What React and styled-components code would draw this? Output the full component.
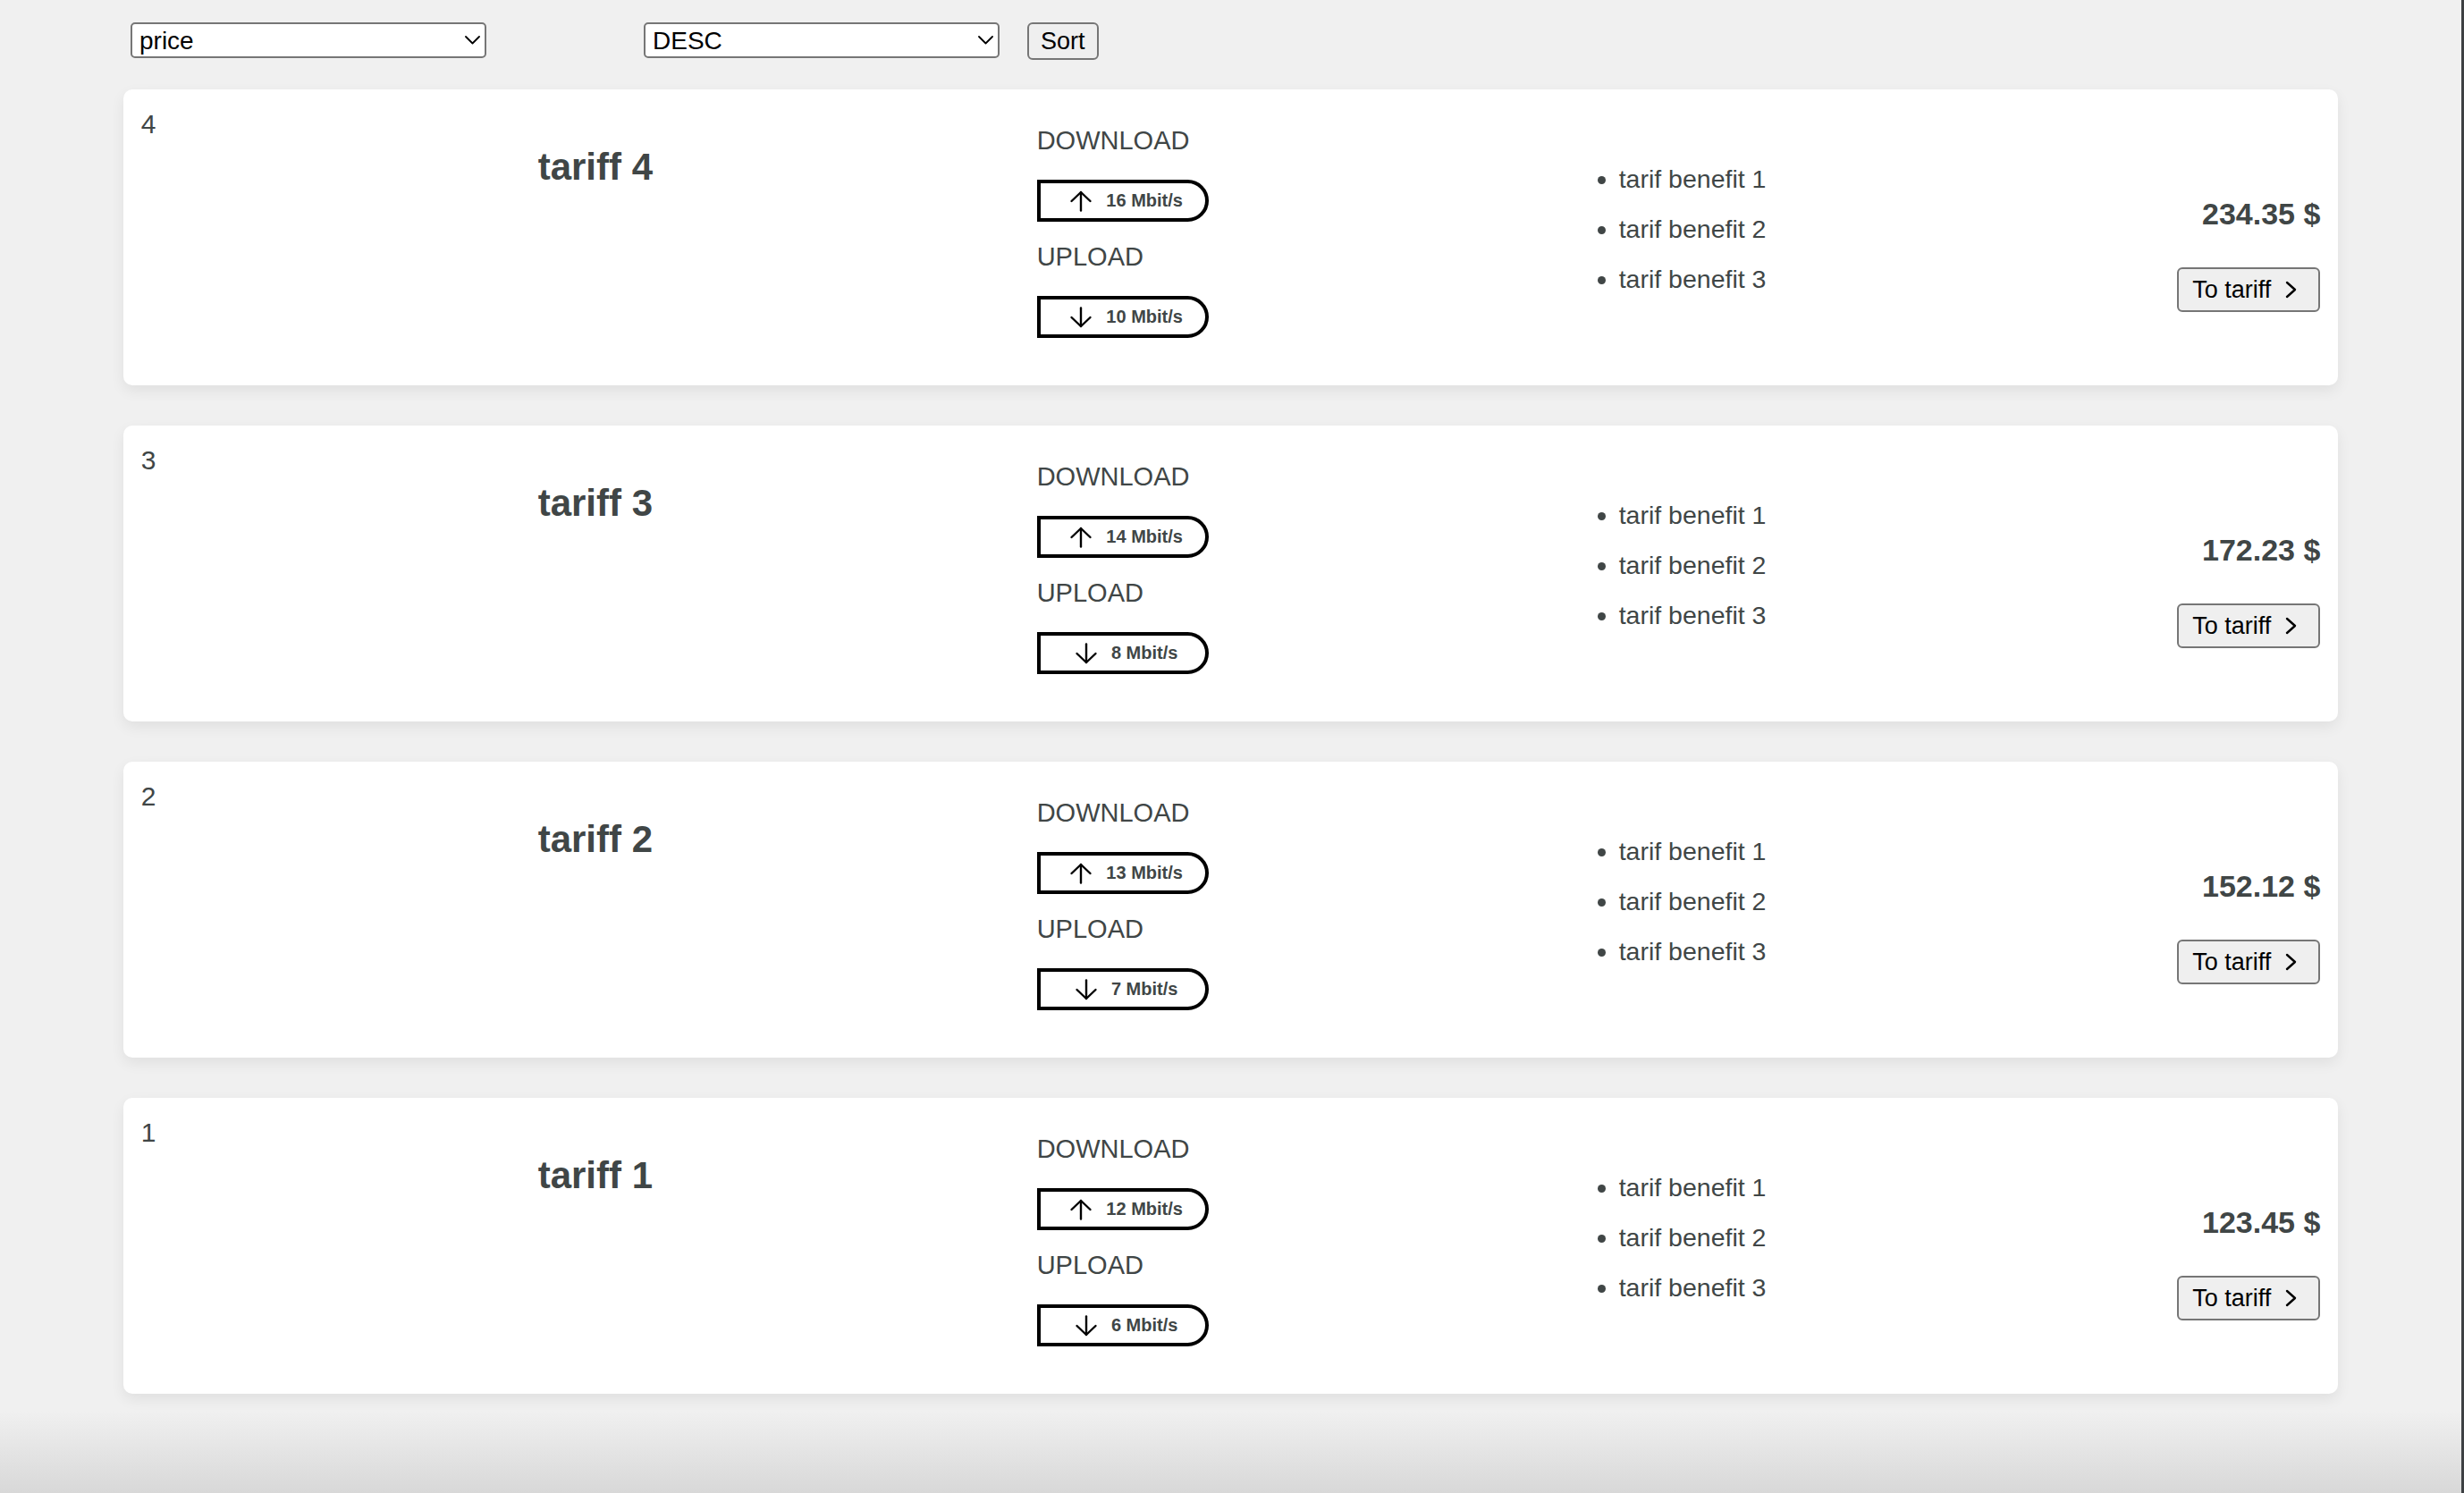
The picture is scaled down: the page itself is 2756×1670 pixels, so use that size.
import React, { useState } from 'react';
import styled, { createGlobalStyle } from 'styled-components';

const GlobalStyle = createGlobalStyle`
  html, body {
    margin: 0;
    padding: 0;
  }
  body {
    font-family: "Liberation Sans", Arial, Helvetica, sans-serif;
    background: #f0f0f0;
  }
  * {
    box-sizing: border-box;
  }
`;

const Page = styled.div`
  min-height: 100vh;
  border-right: 3px solid #3d4043;
  background: linear-gradient(180deg, #f0f0f0 0%, #f0f0f0 94.5%, #d8d8d8 100%);
  padding-bottom: 40px;
`;

const Toolbar = styled.div`
  display: flex;
  align-items: flex-start;
  padding: 25px 0 0 146px;
`;

const SelectWrap = styled.div`
  position: relative;
  width: 398px;
  height: 40px;
  margin-right: ${(p) => p.$gapAfter}px;
`;

const Select = styled.select`
  appearance: none;
  -webkit-appearance: none;
  width: 100%;
  height: 100%;
  padding: 0 36px 0 8px;
  border: 2px solid #767676;
  border-radius: 5px;
  background: #fff;
  color: #000;
  font-family: "Liberation Sans", Arial, sans-serif;
  font-size: 28px;
  outline: none;
`;

const SelectArrow = styled.svg`
  position: absolute;
  right: 7px;
  top: 15px;
  width: 17px;
  height: 10px;
  pointer-events: none;
`;

const PlainButton = styled.button`
  display: inline-flex;
  align-items: center;
  height: ${(p) => p.$height}px;
  padding: 0 ${(p) => p.$padX}px;
  background: #efefef;
  border: 2px solid #767676;
  border-radius: 6px;
  color: #000;
  font-family: "Liberation Sans", Arial, sans-serif;
  font-size: 27px;
  cursor: pointer;
`;

const ButtonIcon = styled.span`
  display: inline-flex;
  margin-left: 8px;
`;

const CardList = styled.div`
  display: flex;
  flex-direction: column;
  gap: 45px;
  width: 90%;
  margin: 33px auto 0;
`;

const Card = styled.div`
  display: grid;
  grid-template-columns: 444px 558px 619px 1fr auto;
  align-items: start;
  padding: 22px 20px;
  background: #fff;
  border-radius: 10px;
  box-shadow: 0 6px 16px rgba(0, 0, 0, 0.07);
  color: #404646;
`;

const Num = styled.div`
  font-size: 30px;
  line-height: 1.15;
`;

const Title = styled.h2`
  margin: 41px 0 0;
  font-size: 42px;
  font-weight: 700;
  line-height: 1.15;
`;

const Speeds = styled.div`
  display: flex;
  flex-direction: column;
  align-items: flex-start;
  margin: 19px 0 31px;
`;

const SpeedLabel = styled.div`
  font-size: 29px;
  line-height: 32px;
  margin-bottom: 28px;
`;

const SpeedBadge = styled.div`
  display: flex;
  align-items: center;
  justify-content: center;
  gap: 15px;
  width: 192px;
  height: 47px;
  margin-bottom: ${(p) => (p.$last ? 0 : 23)}px;
  padding-left: 8px;
  border: 4px solid #000;
  border-radius: 0 24px 24px 0;
  font-size: 20px;
  font-weight: 700;
`;

const Benefits = styled.ul`
  margin: 62px 0 0;
  padding-left: 32px;
  font-size: 28.5px;
  line-height: 32px;
  list-style: disc;
`;

const Benefit = styled.li`
  margin-bottom: 24px;

  &:last-child {
    margin-bottom: 0;
  }
`;

const PriceCol = styled.div`
  display: flex;
  flex-direction: column;
  align-items: flex-end;
  margin-top: 98px;
`;

const Price = styled.div`
  font-size: 34px;
  font-weight: 700;
  line-height: 39px;
  margin-bottom: 40px;
`;

const ArrowIcon = ({ down }) => (
  <svg width="26" height="24" viewBox="0 0 26 24" fill="none" stroke="#000" strokeWidth="2.4" strokeLinecap="round" strokeLinejoin="round">
    {down ? (
      <>
        <line x1="13" y1="1.5" x2="13" y2="22" />
        <polyline points="2.5,12 13,22 23.5,12" />
      </>
    ) : (
      <>
        <line x1="13" y1="2" x2="13" y2="22.5" />
        <polyline points="2.5,12 13,2 23.5,12" />
      </>
    )}
  </svg>
);

const ChevronRight = () => (
  <svg width="30" height="30" viewBox="0 0 30 30" fill="none" stroke="#000" strokeWidth="2.4" strokeLinecap="round" strokeLinejoin="round">
    <polyline points="10,7 19,15 10,23" />
  </svg>
);

const ChevronDown = () => (
  <SelectArrow viewBox="0 0 17 10" fill="none" stroke="#000" strokeWidth="1.8" strokeLinecap="round" strokeLinejoin="round">
    <polyline points="1,1 8.5,8.5 16,1" />
  </SelectArrow>
);

const tariffs = [
  { id: 4, name: 'tariff 4', down: 16, up: 10, price: '234.35' },
  { id: 3, name: 'tariff 3', down: 14, up: 8, price: '172.23' },
  { id: 2, name: 'tariff 2', down: 13, up: 7, price: '152.12' },
  { id: 1, name: 'tariff 1', down: 12, up: 6, price: '123.45' },
];

const TariffCard = ({ tariff }) => (
  <Card>
    <Num>{tariff.id}</Num>
    <Title>{tariff.name}</Title>
    <Speeds>
      <SpeedLabel>DOWNLOAD</SpeedLabel>
      <SpeedBadge>
        <ArrowIcon />
        <span>{tariff.down} Mbit/s</span>
      </SpeedBadge>
      <SpeedLabel>UPLOAD</SpeedLabel>
      <SpeedBadge $last>
        <ArrowIcon down />
        <span>{tariff.up} Mbit/s</span>
      </SpeedBadge>
    </Speeds>
    <div>
      <Benefits>
        <Benefit>tarif benefit 1</Benefit>
        <Benefit>tarif benefit 2</Benefit>
        <Benefit>tarif benefit 3</Benefit>
      </Benefits>
    </div>
    <PriceCol>
      <Price>{tariff.price} $</Price>
      <PlainButton $height={50} $padX={15}>
        To tariff
        <ButtonIcon>
          <ChevronRight />
        </ButtonIcon>
      </PlainButton>
    </PriceCol>
  </Card>
);

const App = () => {
  const [field, setField] = useState('price');
  const [order, setOrder] = useState('DESC');

  return (
    <Page>
      <GlobalStyle />
      <Toolbar>
        <SelectWrap $gapAfter={176}>
          <Select value={field} onChange={(e) => setField(e.target.value)}>
            <option value="price">price</option>
            <option value="name">name</option>
          </Select>
          <ChevronDown />
        </SelectWrap>
        <SelectWrap $gapAfter={31}>
          <Select value={order} onChange={(e) => setOrder(e.target.value)}>
            <option value="DESC">DESC</option>
            <option value="ASC">ASC</option>
          </Select>
          <ChevronDown />
        </SelectWrap>
        <PlainButton $height={42} $padX={13}>Sort</PlainButton>
      </Toolbar>
      <CardList>
        {tariffs.map((t) => (
          <TariffCard key={t.id} tariff={t} />
        ))}
      </CardList>
    </Page>
  );
};

export default App;
